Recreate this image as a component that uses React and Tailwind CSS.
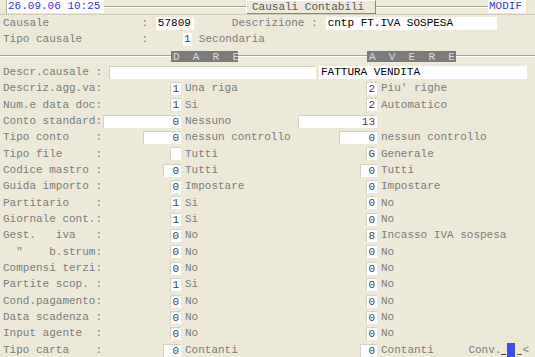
import React from 'react';

const rows = [
  { label: 'Descriz.agg.va:', l: '1', lw: 11, ld: 'Una riga', r: '2', rw: 11, rd: "Piu' righe" },
  { label: 'Num.e data doc:', l: '1', lw: 11, ld: 'Si', r: '2', rw: 11, rd: 'Automatico' },
  { label: 'Conto standard:', l: '0', lw: 78, ld: 'Nessuno', r: '13', rw: 79, rd: '' },
  { label: 'Tipo conto    :', l: '0', lw: 38, ld: 'nessun controllo', r: '0', rw: 38, rd: 'nessun controllo' },
  { label: 'Tipo file     :', l: '', lw: 11, ld: 'Tutti', r: 'G', rw: 11, rd: 'Generale' },
  { label: 'Codice mastro :', l: '0', lw: 18, ld: 'Tutti', r: '0', rw: 17, rd: 'Tutti' },
  { label: 'Guida importo :', l: '0', lw: 11, ld: 'Impostare', r: '0', rw: 11, rd: 'Impostare' },
  { label: 'Partitario    :', l: '1', lw: 11, ld: 'Si', r: '0', rw: 11, rd: 'No' },
  { label: 'Giornale cont.:', l: '1', lw: 11, ld: 'Si', r: '0', rw: 11, rd: 'No' },
  { label: 'Gest.   iva   :', l: '0', lw: 11, ld: 'No', r: '8', rw: 11, rd: 'Incasso IVA sospesa' },
  { label: '  "    b.strum:', l: '0', lw: 11, ld: 'No', r: '0', rw: 11, rd: 'No' },
  { label: 'Compensi terzi:', l: '0', lw: 11, ld: 'No', r: '0', rw: 11, rd: 'No' },
  { label: 'Partite scop. :', l: '1', lw: 11, ld: 'Si', r: '0', rw: 11, rd: 'No' },
  { label: 'Cond.pagamento:', l: '0', lw: 11, ld: 'No', r: '0', rw: 11, rd: 'No' },
  { label: 'Data scadenza :', l: '0', lw: 11, ld: 'No', r: '0', rw: 11, rd: 'No' },
  { label: 'Input agente  :', l: '0', lw: 11, ld: 'No', r: '0', rw: 11, rd: 'No' },
  { label: 'Tipo carta    :', l: '0', lw: 18, ld: 'Contanti', r: '0', rw: 17, rd: 'Contanti', conv: true },
];

const Groove = ({ className = '' }) => (
  <div className={`h-[2px] border-t border-[#a4a094] border-b border-b-white ${className}`} />
);

// campo bianco con valore allineato a destra
const Box = ({ value, width }) => (
  <div
    className="h-[13px] bg-white border-l border-t border-[#d6d2c2] text-right pr-[2px] leading-[13px] text-[#444]"
    style={{ width }}
  >
    {value}
  </div>
);

export default function App() {
  return (
    <div
      className="w-[535px] h-[357px] overflow-hidden bg-[#ece9d8] text-[11px] text-[#7c7c7c] whitespace-pre"
      style={{ fontFamily: '"Liberation Mono", "Courier New", monospace' }}
    >
      {/* Barra titolo */}
      <div className="flex items-start h-[15px] border-b border-[#cfcbbb]">
        <div className="w-[7px] h-[14px] border-r border-[#b8b4a4]" />
        <div className="w-[97px] h-[13px] bg-white text-[#3434ee] leading-[13px] pl-[1px]">26.09.06 10:25</div>
        <Groove className="flex-1 mt-[6px]" />
        <div className="w-[130px] h-[14px] border border-t-white border-l-white border-r-[#8c8878] border-b-[#8c8878] text-[#585858] leading-[12px] pl-[5px]">
          Causali Contabili
        </div>
        <Groove className="w-[112px] mt-[6px]" />
        <div className="w-[38px] h-[13px] bg-white text-[#3434ee] leading-[13px] pl-[1px]">MODIF</div>
        <div className="w-[9px]" />
      </div>

      {/* Causale */}
      <div className="flex items-center h-[16.35px] pl-[3px]">
        <span>{'Causale              : '}</span>
        <div className="ml-[1px] w-[38px] h-[13px] bg-white text-black leading-[13px] pl-[2px]">57809</div>
        <span className="ml-[38px]">Descrizione :</span>
        <div className="ml-[8px] w-[171px] h-[13px] bg-white text-black leading-[13px] pl-[2px]">cntp FT.IVA SOSPESA</div>
      </div>

      {/* Tipo causale */}
      <div className="flex items-center h-[16.35px] pl-[3px]">
        <span>{'Tipo causale         : '}</span>
        <div className="ml-[28px] w-[9px] h-[13px] bg-white text-[#444] leading-[13px] text-center">1</div>
        <span className="ml-[7px]">Secondaria</span>
      </div>

      {/* DARE / AVERE */}
      <div className="flex items-center h-[16.35px] pt-[1px]">
        <Groove className="w-[171px]" />
        <div className="w-[67px] h-[11px] overflow-hidden bg-[#7b7b7b] text-[#dcdcdc] leading-[12px] pl-[2px]">D  A  R  E</div>
        <Groove className="w-[129px]" />
        <div className="w-[89px] h-[11px] overflow-hidden bg-[#7b7b7b] text-[#dcdcdc] leading-[12px] pl-[2px]">A  V  E  R  E</div>
        <Groove className="flex-1" />
      </div>

      {/* Descr.causale */}
      <div className="flex items-center h-[16.35px] pl-[3px]">
        <span className="w-[106px]">Descr.causale :</span>
        <div className="w-[207px] h-[13px] bg-white border-l border-t border-[#d6d2c2]" />
        <div className="ml-[3px] w-[208px] h-[13px] bg-white text-black leading-[13px] pl-[2px]">FATTURA VENDITA</div>
      </div>

      {rows.map((row) => (
        <div key={row.label} className="flex items-center h-[16.35px]">
          <div className="w-[181px] flex items-center justify-between pl-[3px]">
            <span>{row.label}</span>
            <Box value={row.l} width={row.lw} />
          </div>
          <div className="w-[196px] flex items-center justify-between pl-[4px]">
            <span>{row.ld}</span>
            <Box value={row.r} width={row.rw} />
          </div>
          <div className="flex-1 flex items-center justify-between pl-[4px] pr-[6px]">
            <span>{row.rd}</span>
            {row.conv && (
              <div className="flex items-end h-[14px]">
                <span className="leading-[13px]">Conv.</span>
                <span className="w-[5px] h-[1px] bg-[#404040] mb-[2px]" />
                <span className="ml-[1px] w-[8px] h-[14px] bg-[#3f4fe6]" />
                <span className="ml-[2px] w-[5px] h-[1px] bg-[#606060] mb-[2px]" />
                <span className="leading-[13px]">{'<'}</span>
              </div>
            )}
          </div>
        </div>
      ))}
    </div>
  );
}
